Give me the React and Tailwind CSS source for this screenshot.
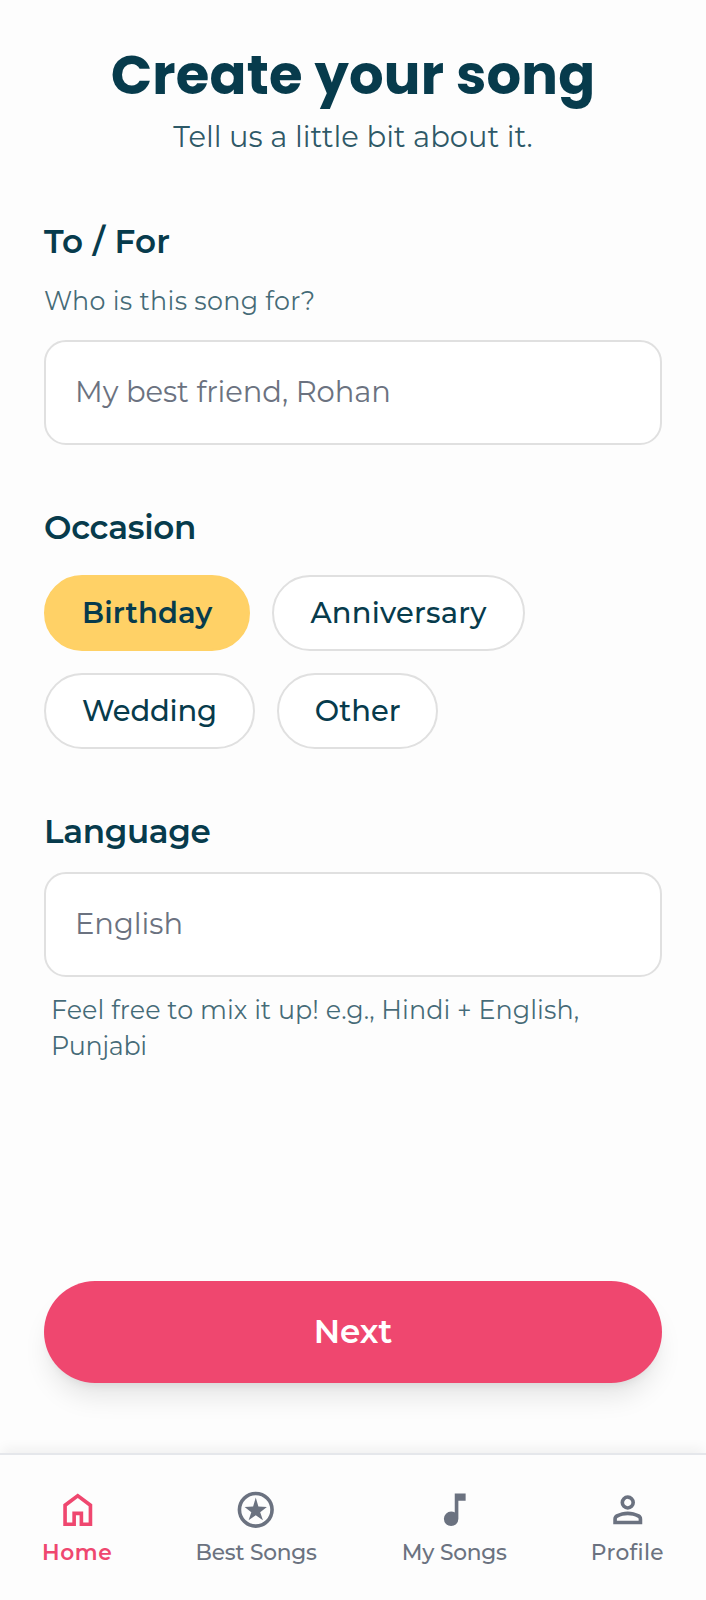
import React, { useState } from 'react';
import clsx from 'clsx';

const OCCASIONS = [
  { name: 'Birthday', tracking: 'tracking-[0.15px]' },
  { name: 'Anniversary', tracking: 'tracking-[0.2px]' },
  { name: 'Wedding', tracking: 'tracking-[-0.2px]' },
  { name: 'Other', tracking: 'tracking-[-0.05px]' },
];

const NAV_ITEMS = [
  {
    label: 'Home',
    tracking: '-mr-px tracking-[0.65px]',
    path: 'M6 19h3v-6h6v6h3v-9l-6-4.5L6 10v9Zm-2 2V9l8-6 8 6v12h-7v-6h-2v6H4Z',
  },
  {
    label: 'Best Songs',
    tracking: 'mr-px tracking-[-0.2px]',
    path: 'M12 5.3l1.45 4.9 4.7.25-3.7 2.9 1.5 4.4L12 15.1l-3.95 2.65 1.5-4.4-3.7-2.9 4.7-.25ZM12 22a10 10 0 1 1 0-20 10 10 0 0 1 0 20Zm0-2a8 8 0 1 0 0-16 8 8 0 0 0 0 16Z',
  },
  {
    label: 'My Songs',
    tracking: 'tracking-[-0.2px]',
    path: 'M10 21q-1.65 0-2.825-1.175T6 17t1.175-2.825T10 13q.575 0 1.063.138t.937.412V3h6v4h-4v10q0 1.65-1.175 2.825T10 21Z',
  },
  {
    label: 'Profile',
    tracking: 'tracking-[0.35px]',
    path: 'M12 12q-1.65 0-2.825-1.175T8 8t1.175-2.825T12 4t2.825 1.175T16 8t-1.175 2.825T12 12Zm-8 8v-2.8q0-.85.438-1.562T5.6 14.55q1.55-.775 3.15-1.163T12 13t3.25.387 3.15 1.163q.725.375 1.163 1.088T20 17.2V20H4Zm2-2h12v-.8q0-.275-.137-.5t-.363-.35q-1.35-.675-2.725-1.012T12 15t-2.775.338T6.5 16.35q-.225.125-.363.35T6 17.2v.8Zm6-8q.825 0 1.413-.587T14 8t-.587-1.412T12 6t-1.412.588T10 8t.588 1.413T12 10Z',
  },
];

function Label({ htmlFor, className, children }) {
  return (
    <label
      htmlFor={htmlFor}
      className={clsx('block text-[32.6px] leading-[50px] font-semibold', className)}
    >
      {children}
    </label>
  );
}

function TextField({ id, placeholder }) {
  return (
    <input
      id={id}
      type="text"
      placeholder={placeholder}
      className="block h-[105px] w-full rounded-[22px] border-2 border-[#e0e0e0] bg-white px-[29px] pb-[3px] text-[29px] tracking-[-0.04px] outline-none placeholder:text-[#6b7280]"
    />
  );
}

export default function App() {
  const [occasion, setOccasion] = useState('Birthday');
  const [tab, setTab] = useState('Home');

  return (
    <div className="flex h-[1600px] w-full flex-col bg-[#fdfdfd] font-['Montserrat','Inter',sans-serif] text-[#073b4c]">
      <main className="flex grow flex-col px-[44px] pt-[43px]">
        <header className="text-center">
          <h1 className="font-['Poppins','Inter',sans-serif] text-[54.4px] leading-[65px] font-bold tracking-[0.2px]">
            Create your song
          </h1>
          <p className="mt-[7px] text-[29px] leading-[43px] text-[#073b4c]/85">
            Tell us a little bit about it.
          </p>
        </header>

        <section className="mt-[58px]">
          <Label htmlFor="recipient" className="tracking-[0.3px]">To / For</Label>
          <p className="mt-[17px] mb-[21px] text-[25.4px] leading-[36px] tracking-[0.3px] text-[#073b4c]/75">
            Who is this song for?
          </p>
          <TextField id="recipient" placeholder="My best friend, Rohan" />
        </section>

        <section className="mt-[57px]">
          <Label className="tracking-[-0.28px]">Occasion</Label>
          <div className="mt-[23px] flex flex-wrap gap-[22px]">
            {OCCASIONS.map(({ name, tracking }) => (
              <button
                key={name}
                type="button"
                onClick={() => setOccasion(name)}
                className={clsx(
                  'h-[76px] rounded-full border-2 px-[36px] pb-px text-[29px]',
                  tracking,
                  occasion === name
                    ? 'border-[#ffd166] bg-[#ffd166] font-semibold'
                    : 'border-[#e0e0e0] bg-white font-medium',
                )}
              >
                {name}
              </button>
            ))}
          </div>
        </section>

        <section className="mt-[57px]">
          <Label htmlFor="language" className="tracking-[-0.35px]">Language</Label>
          <div className="mt-[16px]">
            <TextField id="language" placeholder="English" />
          </div>
          <p className="mt-[15px] px-[7px] text-[25.4px] leading-[36px] tracking-[0.07px] text-[#073b4c]/75">
            Feel free to mix it up! e.g., Hindi + English,{' '}
            <span className="tracking-[-0.4px]">Punjabi</span>
          </p>
        </section>

        <button
          type="button"
          className="mt-auto mb-[70px] h-[102px] shrink-0 rounded-full bg-[#ef476f] pb-[2px] text-[32.6px] font-semibold text-white shadow-[0_18px_27px_-5px_rgba(0,0,0,0.1),0_7px_11px_-7px_rgba(0,0,0,0.1)]"
        >
          Next
        </button>
      </main>

      <nav className="flex h-[147px] shrink-0 items-start justify-between border-t-2 border-[#e5e7eb] bg-[#fdfdfd] px-[42px] pt-[33px] shadow-[0_-7px_11px_-2px_rgba(0,0,0,0.05)]">
        {NAV_ITEMS.map(({ label, tracking, path }) => (
          <button
            key={label}
            type="button"
            onClick={() => setTab(label)}
            className={clsx(
              'flex flex-col items-center gap-[6px] text-[21.7px] leading-[29px]',
              tracking,
              tab === label ? 'font-semibold text-[#ef476f]' : 'font-medium text-[#6b7280]',
            )}
          >
            <svg viewBox="0 0 24 24" className="size-[43.5px] fill-current" aria-hidden="true">
              <path d={path} />
            </svg>
            {label}
          </button>
        ))}
      </nav>
    </div>
  );
}
